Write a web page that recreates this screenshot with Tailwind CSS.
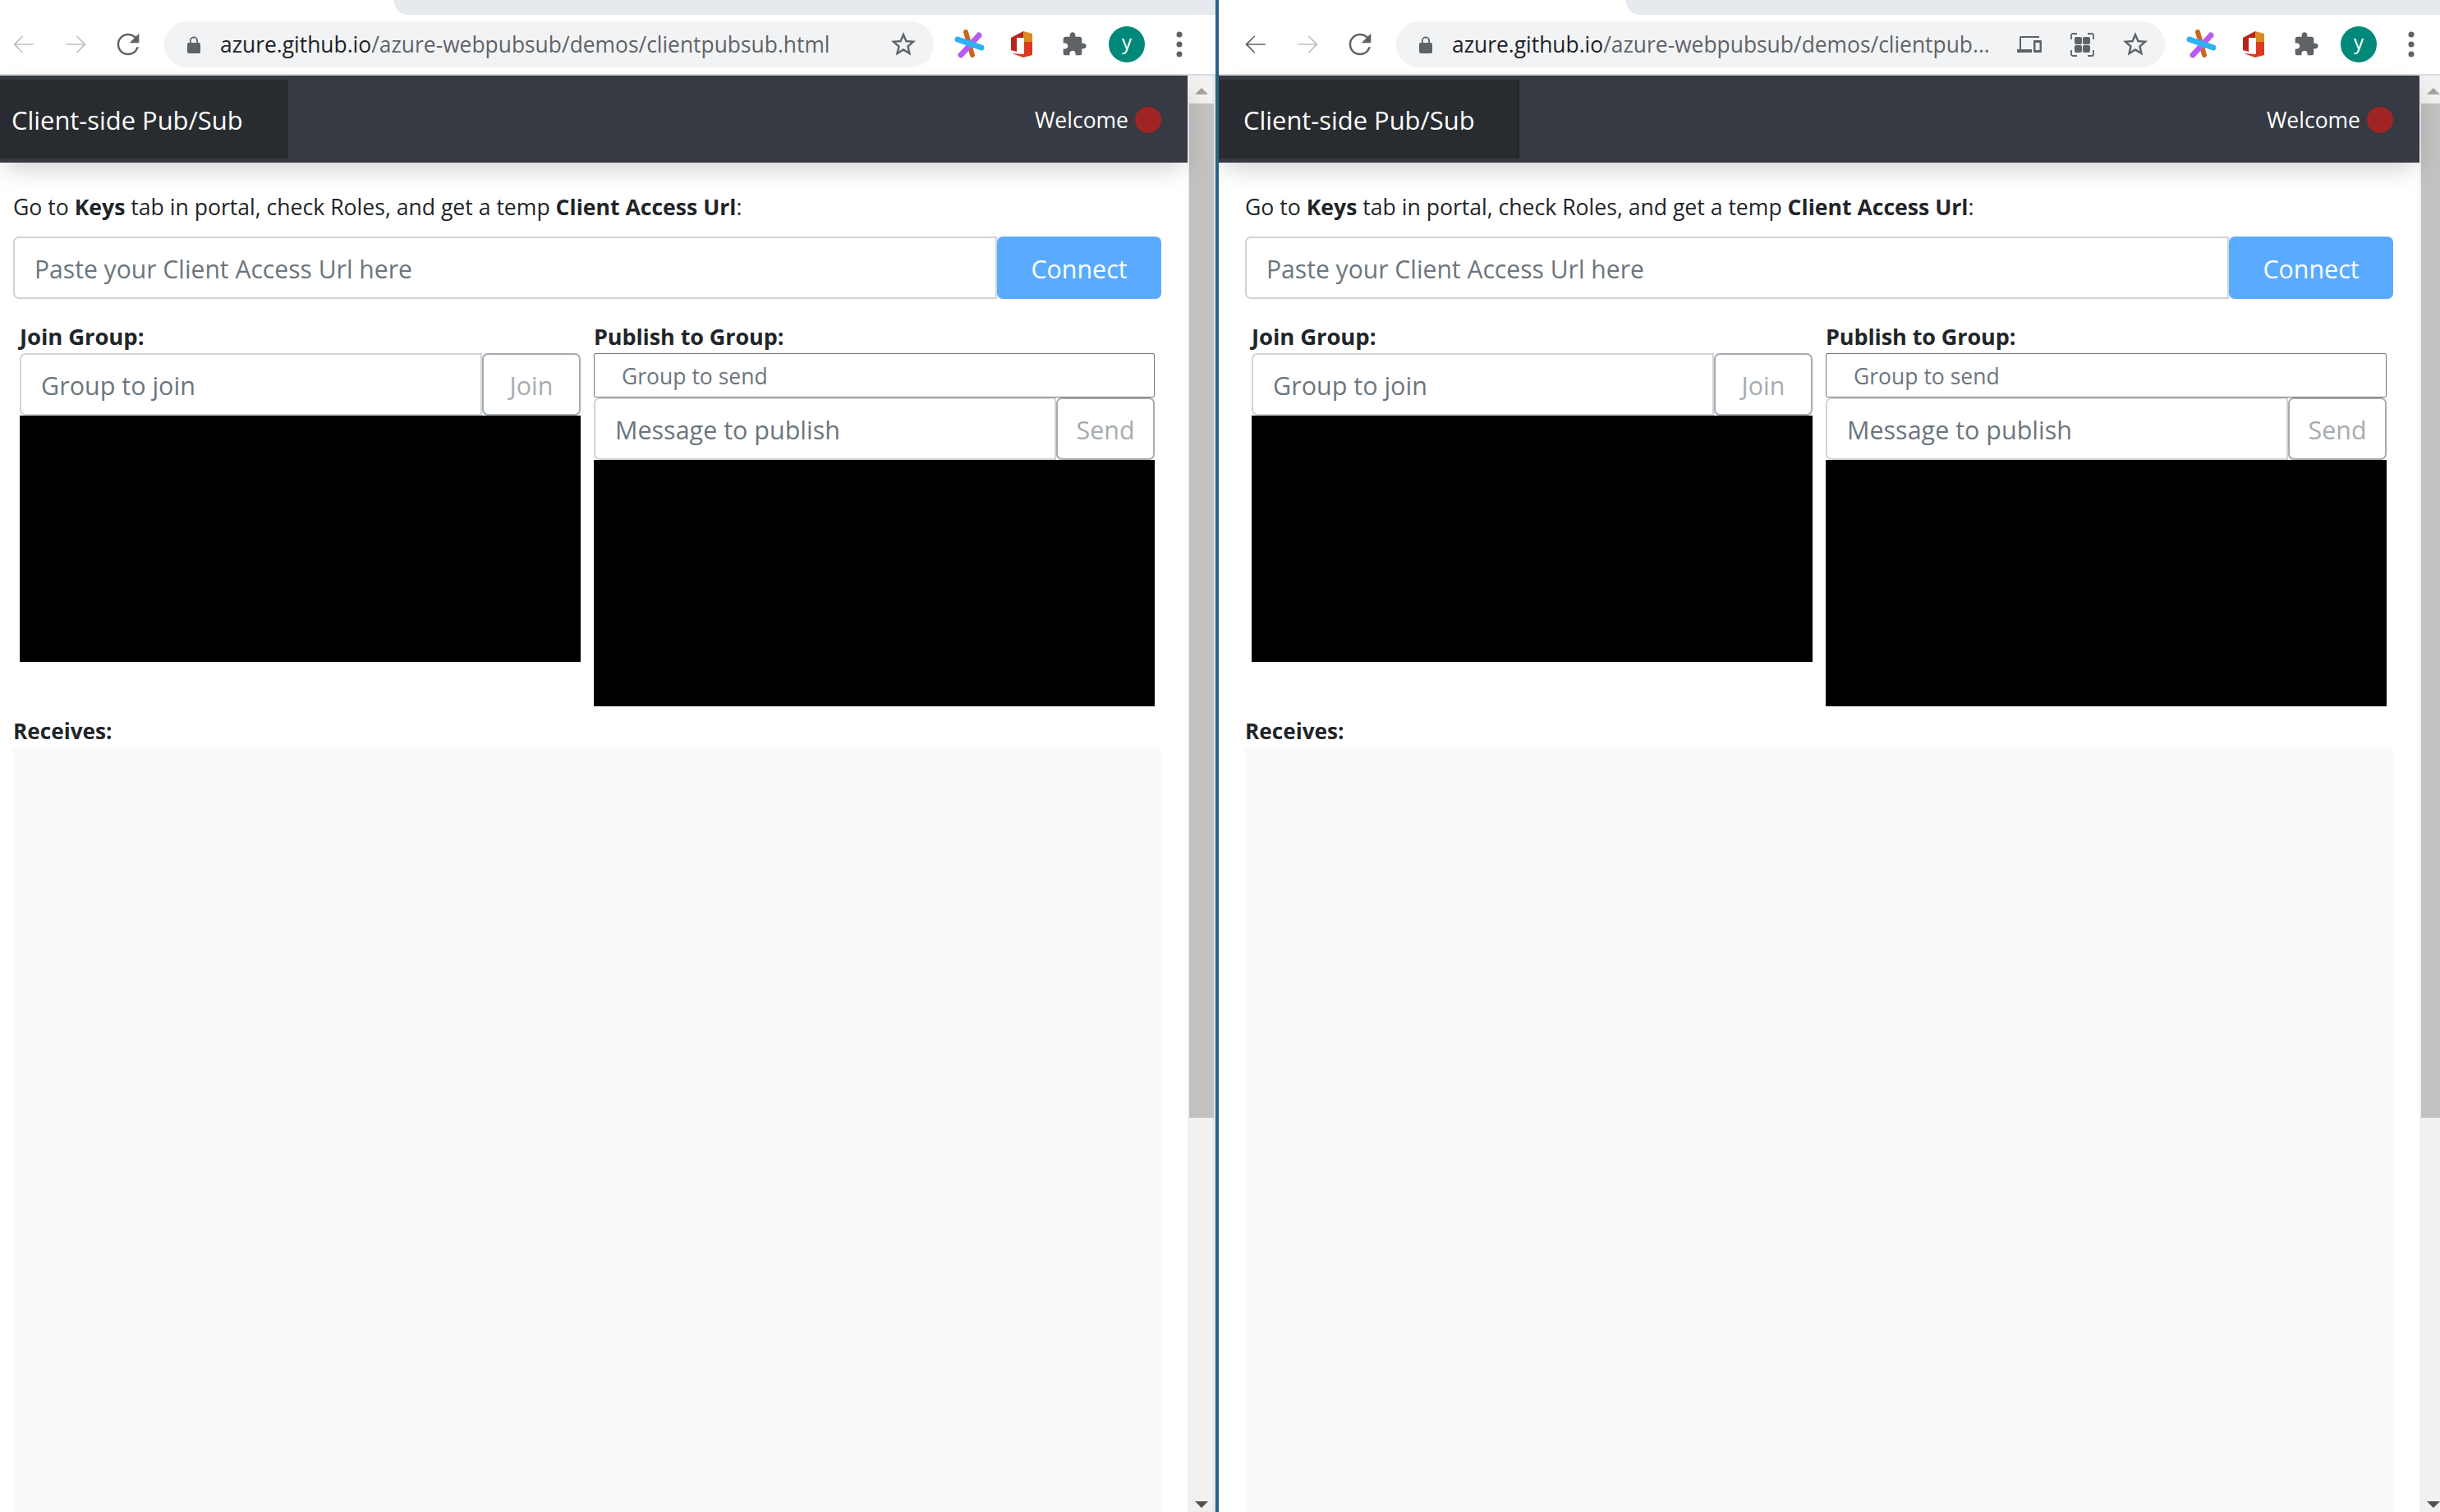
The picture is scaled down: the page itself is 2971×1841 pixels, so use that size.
<!DOCTYPE html>
<html lang="en">
<head>
<meta charset="utf-8">
<title>Client-side Pub/Sub</title>
<script src="https://cdn.jsdelivr.net/npm/@tailwindcss/browser@4"></script>
</head>
<body class="bg-white overflow-hidden font-['Open_Sans','Noto_Sans',sans-serif] text-[#212529]">
<div class="flex h-[1841px] w-[2971px] overflow-hidden">

  <!-- LEFT WINDOW -->
  <section class="w-[1480px] shrink-0 flex flex-col overflow-hidden">
    <div class="h-[92px] shrink-0 bg-white border-b-2 border-[#dadce0] flex flex-col">
      <div class="h-[18px] shrink-0 pl-[480px]"><div class="h-full w-[1040px] bg-[#e6e9ed] rounded-bl-[16px]"></div></div>
      <div class="h-[8px] shrink-0"></div>
      <div class="flex items-center h-[56px]">
        <div class="w-[56px] flex justify-center"><svg class="w-[38px] h-[38px] fill-[#bdc1c6]" viewBox="0 0 24 24"><path d="M20 11.5H6.8l5.4-5.6-.7-.7L4.6 12l6.9 6.8.7-.7-5.4-5.6H20z"/></svg></div>
        <div class="w-[74px] flex justify-center"><svg class="w-[38px] h-[38px] fill-[#bdc1c6]" viewBox="0 0 24 24"><path d="M4 11.5h13.2l-5.4-5.6.7-.7 6.9 6.8-6.9 6.8-.7-.7 5.4-5.6H4z"/></svg></div>
        <div class="w-[52px] flex justify-center"><svg class="w-[40px] h-[40px] fill-[#5f6368]" viewBox="0 0 24 24"><path d="M17.65 6.35A7.958 7.958 0 0 0 12 4c-4.42 0-7.99 3.58-7.99 8s3.57 8 7.99 8c3.73 0 6.84-2.55 7.73-6h-1.6A6.5 6.5 0 0 1 12 18.5c-3.59 0-6.5-2.91-6.5-6.5S8.41 5.5 12 5.5c1.8 0 3.4.75 4.6 1.9L13 11h7V4l-2.35 2.35z"/></svg></div>
        <div class="ml-[18px] w-[937px] h-[56px] rounded-full bg-[#f1f3f4] flex items-center">
          <svg class="ml-[28px] w-[16px] h-[21px] fill-[#5f6368]" viewBox="0 0 16 21"><path d="M3 8V5.5a5 5 0 0 1 10 0V8h1.2A1.8 1.8 0 0 1 16 9.8v9.4a1.8 1.8 0 0 1-1.8 1.8H1.8A1.8 1.8 0 0 1 0 19.2V9.8A1.8 1.8 0 0 1 1.8 8zm1.8 0h6.4V5.5a3.2 3.2 0 0 0-6.4 0z"/></svg>
          <div class="ml-[24px] text-[26.4px] leading-none whitespace-nowrap text-[#5f6368]"><span class="text-[#202124]">azure.github.io</span>/azure-webpubsub/demos/clientpubsub.html</div>
          <svg class="ml-auto mr-[19px] w-[36px] h-[36px] fill-[#5f6368]" viewBox="0 0 24 24"><path d="M22 9.24l-7.19-.62L12 2 9.19 8.63 2 9.24l5.46 4.73L5.82 21 12 17.27 18.18 21l-1.63-7.03L22 9.24zM12 15.4l-3.76 2.27 1-4.28-3.32-2.88 4.38-.38L12 6.1l1.71 4.04 4.38.38-3.32 2.88 1 4.28L12 15.4z"/></svg>
        </div>
        <div class="ml-[11px] w-[64px] flex justify-center"><svg class="w-[36px] h-[36px]" viewBox="0 0 36 36"><path d="M14 3l8 28" stroke="#c9661f" stroke-width="6" stroke-linecap="round"/><path d="M8 31L30 7" stroke="#b45cf5" stroke-width="7" stroke-linecap="round"/><path d="M4 12l29 10" stroke="#2fb0f5" stroke-width="7" stroke-linecap="round"/></svg></div>
        <div class="w-[64px] flex justify-center"><svg class="w-[26px] h-[32px]" viewBox="0 0 26 32"><path d="M0 8 15 0v8H7v17l-7-2z" fill="#b5271b"/><path d="M15 0l11 3v10H16V8h-1z" fill="#dc8a22"/><path d="M16 13h10v16l-11 3-14-5 15 1z" fill="#dc3a1e"/></svg></div>
        <div class="w-[64px] flex justify-center"><svg class="w-[32px] h-[32px] fill-[#5f6368]" viewBox="0 0 24 24"><path d="M20.5 11H19V7c0-1.1-.9-2-2-2h-4V3.5C13 2.12 11.88 1 10.5 1S8 2.12 8 3.5V5H4c-1.1 0-1.99.9-1.99 2v3.8H3.5c1.49 0 2.7 1.21 2.7 2.7s-1.21 2.7-2.7 2.7H2V20c0 1.1.9 2 2 2h3.8v-1.5c0-1.49 1.21-2.7 2.7-2.7 1.49 0 2.7 1.21 2.7 2.7V22H17c1.1 0 2-.9 2-2v-4h1.5c1.38 0 2.5-1.12 2.5-2.5S21.88 11 20.5 11z"/></svg></div>
        <div class="w-[64px] flex justify-center"><div class="w-[44px] h-[44px] rounded-full bg-[#00897b] text-white text-[24px] leading-[38px] text-center">y</div></div>
        <div class="w-[64px] flex justify-center"><svg class="w-[8px] h-[32px] fill-[#5f6368]" viewBox="0 0 8 32"><circle cx="4" cy="4" r="3.5"/><circle cx="4" cy="16" r="3.5"/><circle cx="4" cy="28" r="3.5"/></svg></div>
      </div>
    </div>
    <div class="flex flex-1 min-h-0">
      <main class="w-[1446px] shrink-0 flex flex-col">
        <nav class="relative z-10 h-[106px] shrink-0 bg-[#363a42] flex items-center shadow-[0_12px_28px_-6px_rgba(0,0,0,0.2)]">
          <div class="w-[350px] h-[96px] bg-[#282b2f] border-r border-[#222428] flex items-center pl-[14px] pt-[2px] text-white text-[30.9px]">Client-side Pub/Sub</div>
          <div class="ml-auto mr-[32px] flex items-center gap-[8px] text-white text-[26.5px]"><span class="pt-[3px]">Welcome</span><span class="w-[32px] h-[32px] mt-[2px] rounded-full bg-[#a12424]"></span></div>
        </nav>
        <div class="flex-1 min-h-0 flex flex-col px-[16px]">
          <p class="h-[90px] shrink-0 pt-[36px] text-[26.6px] leading-[36px] whitespace-nowrap">Go to <b>Keys</b> tab in portal, check Roles, and get a temp <b>Client Access Url</b>:</p>
          <div class="flex h-[76px] shrink-0 w-[1398px]">
            <input class="flex-1 min-w-0 border-2 border-[#ced4da] rounded-l-[7px] px-[24px] pt-[4px] text-[30.1px] placeholder:text-[#6c757d] outline-none" placeholder="Paste your Client Access Url here">
            <button class="w-[200px] bg-[#5aabff] rounded-[7px] pt-[4px] text-white text-[30.4px]">Connect</button>
          </div>
          <div class="flex gap-[16px] pl-[8px] mt-[36px] h-[475px] shrink-0">
            <div class="w-[683px] flex flex-col">
              <label class="h-[30px] shrink-0 text-[27.5px] leading-[20px] font-bold tracking-[-0.1px]">Join Group:</label>
              <div class="flex h-[76px] shrink-0">
                <input class="flex-1 min-w-0 border-2 border-[#ced4da] rounded-l-[7px] px-[24px] pt-[4px] text-[30.5px] placeholder:text-[#6c757d] outline-none" placeholder="Group to join">
                <button class="w-[120px] border-2 border-[#a6abb0] rounded-[7px] pt-[4px] text-[#a6abb0] text-[30.4px]">Join</button>
              </div>
              <div class="h-[300px] shrink-0 bg-black"></div>
            </div>
            <div class="w-[683px] flex flex-col">
              <label class="h-[30px] shrink-0 text-[27px] leading-[20px] font-bold tracking-[-0.1px]">Publish to Group:</label>
              <input class="h-[54px] shrink-0 border border-[#767676] rounded-[2px] pl-[33px] pt-[2px] text-[26.5px] placeholder:text-[#6c757d] outline-none" placeholder="Group to send">
              <div class="flex h-[76px] shrink-0">
                <input class="flex-1 min-w-0 border-2 border-[#ced4da] rounded-l-[7px] px-[24px] pt-[4px] text-[30.5px] placeholder:text-[#6c757d] outline-none" placeholder="Message to publish">
                <button class="w-[120px] border-2 border-[#a6abb0] rounded-[7px] pt-[4px] text-[#a6abb0] text-[30.4px]">Send</button>
              </div>
              <div class="h-[300px] shrink-0 bg-black"></div>
            </div>
          </div>
          <div class="h-[35px] shrink-0 text-[26.2px] leading-[30px] font-bold">Receives:</div>
          <div class="flex-1 min-h-0 w-[1398px] bg-[#f9fafa]"></div>
        </div>
      </main>
      <aside class="relative w-[34px] shrink-0 bg-[#f1f1f1] shadow-[inset_-4px_0_4px_-2px_rgba(0,0,0,0.08)]">
        <div class="absolute left-[9px] top-[15px] w-0 h-0 border-x-[8px] border-x-transparent border-b-[8px] border-b-[#a3a3a3]"></div>
        <div class="absolute left-[2px] top-[34px] w-[30px] h-[1235px] bg-[#c1c1c1]"></div>
        <div class="absolute left-[9px] top-[1736px] w-0 h-0 border-x-[8px] border-x-transparent border-t-[8px] border-t-[#505050]"></div>
      </aside>
    </div>
  </section>

  <div class="w-[4px] shrink-0 bg-[#2a6283]"></div>

  <!-- RIGHT WINDOW -->
  <section class="flex-1 min-w-0 flex flex-col overflow-hidden">
    <div class="h-[92px] shrink-0 bg-white border-b-2 border-[#dadce0] flex flex-col">
      <div class="h-[18px] shrink-0 pl-[496px]"><div class="h-full bg-[#e6e9ed] rounded-bl-[16px]"></div></div>
      <div class="h-[8px] shrink-0"></div>
      <div class="flex items-center h-[56px] pl-[16px]">
        <div class="w-[56px] flex justify-center"><svg class="w-[38px] h-[38px] fill-[#5f6368]" viewBox="0 0 24 24"><path d="M20 11.5H6.8l5.4-5.6-.7-.7L4.6 12l6.9 6.8.7-.7-5.4-5.6H20z"/></svg></div>
        <div class="w-[74px] flex justify-center"><svg class="w-[38px] h-[38px] fill-[#bdc1c6]" viewBox="0 0 24 24"><path d="M4 11.5h13.2l-5.4-5.6.7-.7 6.9 6.8-6.9 6.8-.7-.7 5.4-5.6H4z"/></svg></div>
        <div class="w-[52px] flex justify-center"><svg class="w-[40px] h-[40px] fill-[#5f6368]" viewBox="0 0 24 24"><path d="M17.65 6.35A7.958 7.958 0 0 0 12 4c-4.42 0-7.99 3.58-7.99 8s3.57 8 7.99 8c3.73 0 6.84-2.55 7.73-6h-1.6A6.5 6.5 0 0 1 12 18.5c-3.59 0-6.5-2.91-6.5-6.5S8.41 5.5 12 5.5c1.8 0 3.4.75 4.6 1.9L13 11h7V4l-2.35 2.35z"/></svg></div>
        <div class="ml-[18px] w-[936px] h-[56px] rounded-full bg-[#f1f3f4] flex items-center">
          <svg class="ml-[28px] w-[16px] h-[21px] fill-[#5f6368]" viewBox="0 0 16 21"><path d="M3 8V5.5a5 5 0 0 1 10 0V8h1.2A1.8 1.8 0 0 1 16 9.8v9.4a1.8 1.8 0 0 1-1.8 1.8H1.8A1.8 1.8 0 0 1 0 19.2V9.8A1.8 1.8 0 0 1 1.8 8zm1.8 0h6.4V5.5a3.2 3.2 0 0 0-6.4 0z"/></svg>
          <div class="ml-[24px] w-[660px] text-[26.4px] leading-none whitespace-nowrap text-[#5f6368]"><span class="text-[#202124]">azure.github.io</span>/azure-webpubsub/demos/clientpub...</div>
          <svg class="ml-auto w-[30px] h-[20px] fill-[#5f6368]" viewBox="0 0 30 20"><path d="M3 1.5A1.5 1.5 0 0 1 4.5 0H27v2H5v14h13v4H1a1 1 0 0 1-1-1v-3h3z"/><path fill-rule="evenodd" d="M21 5h8a1 1 0 0 1 1 1v13a1 1 0 0 1-1 1h-8a1 1 0 0 1-1-1V6a1 1 0 0 1 1-1zm1.5 3v9h5V8z"/></svg>
          <svg class="ml-[35px] w-[29px] h-[29px]" viewBox="0 0 29 29"><path d="M8 1H3a2 2 0 0 0-2 2v5M21 1h5a2 2 0 0 1 2 2v5M8 28H3a2 2 0 0 1-2-2v-5M21 28h5a2 2 0 0 0 2-2v-5" fill="none" stroke="#5f6368" stroke-width="1.8"/><rect x="5" y="5" width="9" height="9" rx="2" fill="#5f6368"/><rect x="15" y="5" width="9" height="9" rx="2" fill="#5f6368"/><rect x="5" y="15" width="9" height="9" rx="2" fill="#5f6368"/><rect x="15" y="15" width="9" height="9" rx="2" fill="#5f6368"/></svg>
          <svg class="ml-[32px] mr-[18px] w-[36px] h-[36px] fill-[#5f6368]" viewBox="0 0 24 24"><path d="M22 9.24l-7.19-.62L12 2 9.19 8.63 2 9.24l5.46 4.73L5.82 21 12 17.27 18.18 21l-1.63-7.03L22 9.24zM12 15.4l-3.76 2.27 1-4.28-3.32-2.88 4.38-.38L12 6.1l1.71 4.04 4.38.38-3.32 2.88 1 4.28L12 15.4z"/></svg>
        </div>
        <div class="ml-[12px] w-[64px] flex justify-center"><svg class="w-[36px] h-[36px]" viewBox="0 0 36 36"><path d="M14 3l8 28" stroke="#c9661f" stroke-width="6" stroke-linecap="round"/><path d="M8 31L30 7" stroke="#b45cf5" stroke-width="7" stroke-linecap="round"/><path d="M4 12l29 10" stroke="#2fb0f5" stroke-width="7" stroke-linecap="round"/></svg></div>
        <div class="w-[64px] flex justify-center"><svg class="w-[26px] h-[32px]" viewBox="0 0 26 32"><path d="M0 8 15 0v8H7v17l-7-2z" fill="#b5271b"/><path d="M15 0l11 3v10H16V8h-1z" fill="#dc8a22"/><path d="M16 13h10v16l-11 3-14-5 15 1z" fill="#dc3a1e"/></svg></div>
        <div class="w-[64px] flex justify-center"><svg class="w-[32px] h-[32px] fill-[#5f6368]" viewBox="0 0 24 24"><path d="M20.5 11H19V7c0-1.1-.9-2-2-2h-4V3.5C13 2.12 11.88 1 10.5 1S8 2.12 8 3.5V5H4c-1.1 0-1.99.9-1.99 2v3.8H3.5c1.49 0 2.7 1.21 2.7 2.7s-1.21 2.7-2.7 2.7H2V20c0 1.1.9 2 2 2h3.8v-1.5c0-1.49 1.21-2.7 2.7-2.7 1.49 0 2.7 1.21 2.7 2.7V22H17c1.1 0 2-.9 2-2v-4h1.5c1.38 0 2.5-1.12 2.5-2.5S21.88 11 20.5 11z"/></svg></div>
        <div class="w-[64px] flex justify-center"><div class="w-[44px] h-[44px] rounded-full bg-[#00897b] text-white text-[24px] leading-[38px] text-center">y</div></div>
        <div class="w-[64px] flex justify-center"><svg class="w-[8px] h-[32px] fill-[#5f6368]" viewBox="0 0 8 32"><circle cx="4" cy="4" r="3.5"/><circle cx="4" cy="16" r="3.5"/><circle cx="4" cy="28" r="3.5"/></svg></div>
      </div>
    </div>
    <div class="flex flex-1 min-h-0">
      <main class="w-[1462px] shrink-0 flex flex-col">
        <nav class="relative z-10 h-[106px] shrink-0 bg-[#363a42] flex items-center shadow-[0_12px_28px_-6px_rgba(0,0,0,0.2)]">
          <div class="w-[366px] h-[96px] bg-[#282b2f] border-r border-[#222428] flex items-center pl-[30px] pt-[2px] text-white text-[30.9px]">Client-side Pub/Sub</div>
          <div class="ml-auto mr-[32px] flex items-center gap-[8px] text-white text-[26.5px]"><span class="pt-[3px]">Welcome</span><span class="w-[32px] h-[32px] mt-[2px] rounded-full bg-[#a12424]"></span></div>
        </nav>
        <div class="flex-1 min-h-0 flex flex-col pl-[32px] pr-[16px]">
          <p class="h-[90px] shrink-0 pt-[36px] text-[26.6px] leading-[36px] whitespace-nowrap">Go to <b>Keys</b> tab in portal, check Roles, and get a temp <b>Client Access Url</b>:</p>
          <div class="flex h-[76px] shrink-0 w-[1398px]">
            <input class="flex-1 min-w-0 border-2 border-[#ced4da] rounded-l-[7px] px-[24px] pt-[4px] text-[30.1px] placeholder:text-[#6c757d] outline-none" placeholder="Paste your Client Access Url here">
            <button class="w-[200px] bg-[#5aabff] rounded-[7px] pt-[4px] text-white text-[30.4px]">Connect</button>
          </div>
          <div class="flex gap-[16px] pl-[8px] mt-[36px] h-[475px] shrink-0">
            <div class="w-[683px] flex flex-col">
              <label class="h-[30px] shrink-0 text-[27.5px] leading-[20px] font-bold tracking-[-0.1px]">Join Group:</label>
              <div class="flex h-[76px] shrink-0">
                <input class="flex-1 min-w-0 border-2 border-[#ced4da] rounded-l-[7px] px-[24px] pt-[4px] text-[30.5px] placeholder:text-[#6c757d] outline-none" placeholder="Group to join">
                <button class="w-[120px] border-2 border-[#a6abb0] rounded-[7px] pt-[4px] text-[#a6abb0] text-[30.4px]">Join</button>
              </div>
              <div class="h-[300px] shrink-0 bg-black"></div>
            </div>
            <div class="w-[683px] flex flex-col">
              <label class="h-[30px] shrink-0 text-[27px] leading-[20px] font-bold tracking-[-0.1px]">Publish to Group:</label>
              <input class="h-[54px] shrink-0 border border-[#767676] rounded-[2px] pl-[33px] pt-[2px] text-[26.5px] placeholder:text-[#6c757d] outline-none" placeholder="Group to send">
              <div class="flex h-[76px] shrink-0">
                <input class="flex-1 min-w-0 border-2 border-[#ced4da] rounded-l-[7px] px-[24px] pt-[4px] text-[30.5px] placeholder:text-[#6c757d] outline-none" placeholder="Message to publish">
                <button class="w-[120px] border-2 border-[#a6abb0] rounded-[7px] pt-[4px] text-[#a6abb0] text-[30.4px]">Send</button>
              </div>
              <div class="h-[300px] shrink-0 bg-black"></div>
            </div>
          </div>
          <div class="h-[35px] shrink-0 text-[26.2px] leading-[30px] font-bold">Receives:</div>
          <div class="flex-1 min-h-0 w-[1398px] bg-[#f9fafa]"></div>
        </div>
      </main>
      <aside class="relative flex-1 min-w-0 bg-[#f1f1f1] overflow-hidden">
        <div class="absolute left-[9px] top-[15px] w-0 h-0 border-x-[8px] border-x-transparent border-b-[8px] border-b-[#a3a3a3]"></div>
        <div class="absolute left-[2px] top-[34px] w-[30px] h-[1235px] bg-[#c1c1c1]"></div>
        <div class="absolute left-[9px] top-[1736px] w-0 h-0 border-x-[8px] border-x-transparent border-t-[8px] border-t-[#505050]"></div>
      </aside>
    </div>
  </section>
</div>
</body>
</html>
